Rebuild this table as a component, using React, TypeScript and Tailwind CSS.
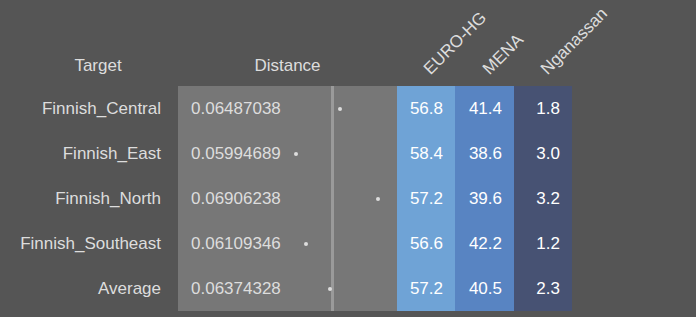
import React from 'react';

type Row = {
  target: string;
  distance: number;
  euro: string;
  mena: string;
  nga: string;
};

const rows: Row[] = [
  { target: 'Finnish_Central', distance: 0.06487038, euro: '56.8', mena: '41.4', nga: '1.8' },
  { target: 'Finnish_East', distance: 0.05994689, euro: '58.4', mena: '38.6', nga: '3.0' },
  { target: 'Finnish_North', distance: 0.06906238, euro: '57.2', mena: '39.6', nga: '3.2' },
  { target: 'Finnish_Southeast', distance: 0.06109346, euro: '56.6', mena: '42.2', nga: '1.2' },
  { target: 'Average', distance: 0.06374328, euro: '57.2', mena: '40.5', nga: '2.3' },
];

// dot x inside the distance cell (px from its left edge)
const dotLeft = (v: number) => 118 + (v - 0.05994689) * 9001 - 2;

function RotatedHeader({ label, width }: { label: string; width: string }) {
  return (
    <div className={`${width} flex h-full items-end pb-[7px]`}>
      <span className="ml-[calc(50%+8px)] inline-block origin-bottom-left -rotate-45 whitespace-nowrap leading-[20px]">
        {label}
      </span>
    </div>
  );
}

export default function App() {
  return (
    <div
      className="h-[317px] w-full overflow-hidden bg-[#555555] pl-[18px] text-[17px] text-[#dddddd]"
      style={{ fontFamily: '"Liberation Sans", Arial, sans-serif' }}
    >
      <div className="flex h-[86px] items-end">
        <div className="w-[160px] pb-[10px] text-center leading-[20px]">Target</div>
        <div className="w-[219px] pb-[10px] text-center leading-[20px]">Distance</div>
        <RotatedHeader label="EURO-HG" width="w-[58px]" />
        <RotatedHeader label="MENA" width="w-[59px]" />
        <RotatedHeader label="Nganassan" width="w-[58px]" />
      </div>

      <div className="flex flex-col">
        {rows.map((r) => (
          <div key={r.target} className="flex h-[45px] items-stretch">
            <div className="flex w-[160px] items-center justify-end pr-[17px]">{r.target}</div>
            <div className="relative flex w-[219px] items-center bg-[#777777] pl-[13px]">
              <span>{r.distance.toFixed(8)}</span>
              <div className="absolute inset-y-0 left-[153px] w-[3px] bg-[#9a9a9a]" />
              <div
                className="absolute top-1/2 h-[4px] w-[4px] -translate-y-1/2 rounded-full bg-[#dddddd]"
                style={{ left: `${dotLeft(r.distance)}px` }}
              />
            </div>
            <div className="flex w-[58px] items-center justify-end bg-[#6fa3d6] pr-[12px] text-white">
              {r.euro}
            </div>
            <div className="flex w-[59px] items-center justify-end bg-[#5884c2] pr-[12px] text-white">
              {r.mena}
            </div>
            <div className="flex w-[58px] items-center justify-end bg-[#475273] pr-[12px] text-white">
              {r.nga}
            </div>
          </div>
        ))}
      </div>
    </div>
  );
}
